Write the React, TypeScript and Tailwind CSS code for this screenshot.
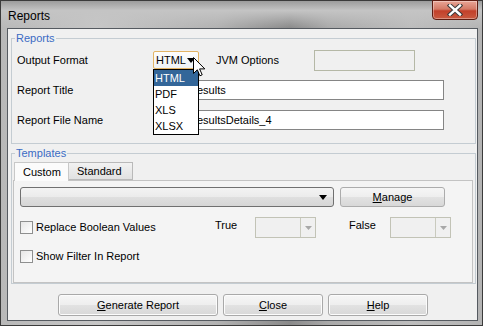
import React from 'react';

const font = { fontFamily: '"Liberation Sans", Arial, sans-serif' };

function Mnemonic({ text }: { text: string }) {
  return (
    <span>
      <span className="underline underline-offset-[1px]">{text[0]}</span>
      {text.slice(1)}
    </span>
  );
}

function Button({ label, width }: { label: string; width: string }) {
  return (
    <div
      className={`${width} h-[22px] flex items-center justify-center rounded-[3px] border border-[#a9a9a9] bg-[linear-gradient(#f6f6f6_0%,#eeeeee_50%,#e2e2e2_51%,#d8d8d8_100%)] shadow-[inset_0_0_0_1px_#fcfcfc] text-[11px] text-black`}
    >
      <Mnemonic text={label} />
    </div>
  );
}

function Checkbox({ label }: { label: string }) {
  return (
    <div className="flex items-center gap-[3px]">
      <div className="w-[13px] h-[13px] border border-[#8e8f8f] bg-[linear-gradient(135deg,#e6e6e6,#ffffff)]" />
      <span className="text-[11px]">{label}</span>
    </div>
  );
}

function DisabledCombo() {
  return (
    <div className="w-[61px] h-[21px] flex border border-[#c2c3b6] bg-[#f0f0f0]">
      <div className="flex-1" />
      <div className="w-[15px] flex items-center justify-center border-l border-[#c9cabe]">
        <svg width="7" height="4" viewBox="0 0 7 4">
          <path d="M0 0h7L3.5 4z" fill="#a8a8a8" />
        </svg>
      </div>
    </div>
  );
}

function Cursor() {
  return (
    <svg width="13" height="20" viewBox="0 0 13 20" className="absolute left-[40px] top-[6px] z-30">
      <path
        d="M0.5 0.5 L0.5 16.5 L4.3 12.8 L6.9 18.8 L9.2 17.8 L6.6 11.9 L11.8 11.9 Z"
        fill="#ffffff"
        stroke="#000000"
        strokeWidth="1"
        strokeLinejoin="round"
      />
    </svg>
  );
}

function FormatCombo() {
  const options = ['HTML', 'PDF', 'XLS', 'XLSX'];
  return (
    <div className="relative w-[46px] h-[18px]">
      <div className="w-full h-full flex items-center rounded-[2px] border border-[#e2b465] bg-[linear-gradient(#fdfdfd,#eef2f5)] pl-[2px] text-[11px]">
        HTML
        <svg width="8" height="5" viewBox="0 0 8 5" className="absolute left-[34px] top-[7px]">
          <path d="M0 0h8L4 5z" fill="#000000" />
        </svg>
      </div>
      <Cursor />
      {/* Open list */}
      <div className="absolute left-0 top-[18px] z-20 w-[46px] border border-black bg-white">
        {options.map((o, i) => (
          <div
            key={o}
            className={`h-[16px] leading-[16px] pl-[1px] text-[11px] ${i === 0 ? 'bg-[#336699] text-white' : 'text-black'}`}
          >
            {o}
          </div>
        ))}
      </div>
    </div>
  );
}

export default function App() {
  return (
    <div
      style={font}
      className="w-[483px] h-[326px] flex flex-col border border-[#3b3b3b] bg-[linear-gradient(90deg,#b8b8b8_0%,#c6c6c6_20%,#b2b2b2_45%,#8a8a8a_60%,#a9a9a9_68%,#bdbdbd_85%,#b4b4b4_100%)] text-black"
    >
      {/* Title bar */}
      <div className="h-[27px] flex justify-between bg-[linear-gradient(#9c9c9c_0%,#c4c4c4_35%,rgba(200,200,200,0)_100%)]">
        <div className="pl-[7px] pt-[8px] text-[12px] leading-[15px]">Reports</div>
        <div className="mr-[4px] -mt-[1px] w-[46px] h-[20px] flex items-center justify-center rounded-b-[4px] border border-[#5e1d12] bg-[linear-gradient(#e9a596_0%,#d47a66_45%,#c2402a_55%,#c95a40_100%)] shadow-[inset_0_0_0_1px_rgba(255,255,255,0.35)]">
          <svg width="16" height="12" viewBox="0 0 16 12">
            <path d="M3 1.5 L13 10.5 M13 1.5 L3 10.5" stroke="#3a3a3a" strokeWidth="4.4" strokeLinecap="square" />
            <path d="M3 1.5 L13 10.5 M13 1.5 L3 10.5" stroke="#ffffff" strokeWidth="2.4" strokeLinecap="square" />
          </svg>
        </div>
      </div>

      {/* Dialog body */}
      <div className="flex-1 ml-[6px] mr-[4px] mb-[4px] flex flex-col border border-[#555a60] bg-[#f0f0f0] text-[11px]">
        {/* Reports group */}
        <fieldset className="ml-[3px] mr-[1px] mt-[3px] border border-[#c4ccd2] pl-[5px] pt-[5px] pb-[13px]">
          <legend className="-ml-[2px] px-[1px] text-[11px] leading-[13px] text-[#3a6bc4]">Reports</legend>
          <div className="flex flex-col gap-[10px]">
            <div className="h-[20px] flex items-center">
              <div className="w-[136px]">Output Format</div>
              <FormatCombo />
              <div className="ml-[17px] w-[98px]">JVM Options</div>
              <div className="w-[101px] h-[21px] border border-[#b5b8a6] bg-[#f0f0f0]" />
            </div>
            {/* the open list covers the start of these two fields */}
            <div className="h-[20px] flex items-center">
              <div className="w-[136px]">Report Title</div>
              <div className="w-[291px] h-[20px] flex items-center border border-[#858585] bg-white pl-[43px]">
                esults
              </div>
            </div>
            <div className="h-[20px] flex items-center">
              <div className="w-[136px]">Report File Name</div>
              <div className="w-[291px] h-[20px] flex items-center border border-[#858585] bg-white pl-[43px]">
                esultsDetails_4
              </div>
            </div>
          </div>
        </fieldset>

        {/* Templates group */}
        <fieldset className="ml-[3px] mr-[1px] mt-[3px] border border-[#c4ccd2] pl-[1px] pr-[2px] pt-[2px]">
          <legend className="ml-[2px] px-[1px] text-[11px] leading-[13px] text-[#3a6bc4]">Templates</legend>
          {/* Tabs */}
          <div className="flex h-[18px] pl-[1px]">
            <div className="relative z-10 w-[55px] h-[19px] flex items-center pl-[8px] border border-b-0 border-[#c8c8c8] bg-[#fbfbfb]">
              Custom
            </div>
            <div className="w-[64px] h-[18px] flex items-center pl-[8px] border border-l-0 border-[#b9b9b9] bg-[linear-gradient(#f2f2f2,#e1e1e1)]">
              Standard
            </div>
          </div>
          <div className="h-[103px] border border-[#c3c3c3] bg-[#f4f4f4] pl-[6px] pt-[6px] flex flex-col">
            <div className="flex items-center">
              <div className="w-[314px] h-[20px] flex items-center justify-end pr-[6px] rounded-[3px] border border-[#707070] bg-[linear-gradient(#f3f3f3_0%,#ebebeb_50%,#dfdfdf_51%,#d6d6d6_100%)]">
                <svg width="8" height="5" viewBox="0 0 8 5">
                  <path d="M0 0h8L4 5z" fill="#000000" />
                </svg>
              </div>
              <div className="ml-[6px] w-[105px] h-[20px] flex items-center justify-center rounded-[3px] border border-[#acacac] bg-[linear-gradient(#f6f6f6_0%,#eeeeee_50%,#e2e2e2_51%,#d8d8d8_100%)]">
                <Mnemonic text="Manage" />
              </div>
            </div>
            <div className="mt-[10px] h-[21px] flex items-center">
              <div className="w-[195px]">
                <Checkbox label="Replace Boolean Values" />
              </div>
              <div className="w-[40px] -mt-[4px]">True</div>
              <DisabledCombo />
              <div className="ml-[33px] w-[41px] -mt-[4px]">False</div>
              <DisabledCombo />
            </div>
            <div className="mt-[10px] h-[17px] flex items-center">
              <Checkbox label="Show Filter In Report" />
            </div>
          </div>
        </fieldset>

        {/* Buttons */}
        <div className="mt-[10px] pl-[50px] flex gap-[5px]">
          <Button label="Generate Report" width="w-[160px]" />
          <Button label="Close" width="w-[100px]" />
          <Button label="Help" width="w-[100px]" />
        </div>
      </div>
    </div>
  );
}
